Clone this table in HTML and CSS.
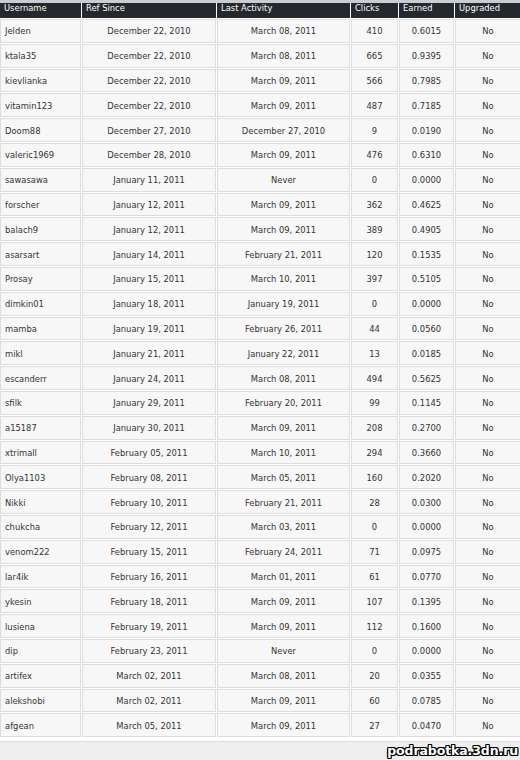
FILE: index.html
```html
<!DOCTYPE html>
<html>
<head>
<meta charset="utf-8">
<link rel="stylesheet" href="styles.css">
</head>
<body>
<div class="page">
  <div class="topstrip"></div>
  <table class="refs">
    <colgroup>
      <col class="c-user"><col class="c-since"><col class="c-act"><col class="c-clicks"><col class="c-earned"><col class="c-upg">
    </colgroup>
    <thead>
      <tr><th>Username</th><th>Ref Since</th><th>Last Activity</th><th>Clicks</th><th>Earned</th><th>Upgraded</th></tr>
    </thead>
    <tbody>
      <tr><td>Jelden</td><td>December 22, 2010</td><td>March 08, 2011</td><td>410</td><td>0.6015</td><td>No</td></tr>
      <tr><td>ktala35</td><td>December 22, 2010</td><td>March 08, 2011</td><td>665</td><td>0.9395</td><td>No</td></tr>
      <tr><td>kievlianka</td><td>December 22, 2010</td><td>March 09, 2011</td><td>566</td><td>0.7985</td><td>No</td></tr>
      <tr><td>vitamin123</td><td>December 22, 2010</td><td>March 09, 2011</td><td>487</td><td>0.7185</td><td>No</td></tr>
      <tr><td>Doom88</td><td>December 27, 2010</td><td>December 27, 2010</td><td>9</td><td>0.0190</td><td>No</td></tr>
      <tr><td>valeric1969</td><td>December 28, 2010</td><td>March 09, 2011</td><td>476</td><td>0.6310</td><td>No</td></tr>
      <tr><td>sawasawa</td><td>January 11, 2011</td><td>Never</td><td>0</td><td>0.0000</td><td>No</td></tr>
      <tr><td>forscher</td><td>January 12, 2011</td><td>March 09, 2011</td><td>362</td><td>0.4625</td><td>No</td></tr>
      <tr><td>balach9</td><td>January 12, 2011</td><td>March 09, 2011</td><td>389</td><td>0.4905</td><td>No</td></tr>
      <tr><td>asarsart</td><td>January 14, 2011</td><td>February 21, 2011</td><td>120</td><td>0.1535</td><td>No</td></tr>
      <tr><td>Prosay</td><td>January 15, 2011</td><td>March 10, 2011</td><td>397</td><td>0.5105</td><td>No</td></tr>
      <tr><td>dimkin01</td><td>January 18, 2011</td><td>January 19, 2011</td><td>0</td><td>0.0000</td><td>No</td></tr>
      <tr><td>mamba</td><td>January 19, 2011</td><td>February 26, 2011</td><td>44</td><td>0.0560</td><td>No</td></tr>
      <tr><td>mikl</td><td>January 21, 2011</td><td>January 22, 2011</td><td>13</td><td>0.0185</td><td>No</td></tr>
      <tr><td>escanderr</td><td>January 24, 2011</td><td>March 08, 2011</td><td>494</td><td>0.5625</td><td>No</td></tr>
      <tr><td>sfilk</td><td>January 29, 2011</td><td>February 20, 2011</td><td>99</td><td>0.1145</td><td>No</td></tr>
      <tr><td>a15187</td><td>January 30, 2011</td><td>March 09, 2011</td><td>208</td><td>0.2700</td><td>No</td></tr>
      <tr><td>xtrimall</td><td>February 05, 2011</td><td>March 10, 2011</td><td>294</td><td>0.3660</td><td>No</td></tr>
      <tr><td>Olya1103</td><td>February 08, 2011</td><td>March 05, 2011</td><td>160</td><td>0.2020</td><td>No</td></tr>
      <tr><td>Nikki</td><td>February 10, 2011</td><td>February 21, 2011</td><td>28</td><td>0.0300</td><td>No</td></tr>
      <tr><td>chukcha</td><td>February 12, 2011</td><td>March 03, 2011</td><td>0</td><td>0.0000</td><td>No</td></tr>
      <tr><td>venom222</td><td>February 15, 2011</td><td>February 24, 2011</td><td>71</td><td>0.0975</td><td>No</td></tr>
      <tr><td>lar4ik</td><td>February 16, 2011</td><td>March 01, 2011</td><td>61</td><td>0.0770</td><td>No</td></tr>
      <tr><td>ykesin</td><td>February 18, 2011</td><td>March 09, 2011</td><td>107</td><td>0.1395</td><td>No</td></tr>
      <tr><td>lusiena</td><td>February 19, 2011</td><td>March 09, 2011</td><td>112</td><td>0.1600</td><td>No</td></tr>
      <tr><td>dip</td><td>February 23, 2011</td><td>Never</td><td>0</td><td>0.0000</td><td>No</td></tr>
      <tr><td>artifex</td><td>March 02, 2011</td><td>March 08, 2011</td><td>20</td><td>0.0355</td><td>No</td></tr>
      <tr><td>alekshobi</td><td>March 02, 2011</td><td>March 09, 2011</td><td>60</td><td>0.0785</td><td>No</td></tr>
      <tr><td>afgean</td><td>March 05, 2011</td><td>March 09, 2011</td><td>27</td><td>0.0470</td><td>No</td></tr>
    </tbody>
  </table>
  <div class="footer"></div>
  <div class="watermark">podrabotka.3dn.ru</div>
</div>
</body>
</html>
```
FILE: styles.css
```css
html, body {
  margin: 0;
  padding: 0;
  background: #ffffff;
}
body {
  width: 520px;
  height: 760px;
  overflow: hidden;
  font-family: "DejaVu Sans Condensed", "DejaVu Sans", sans-serif;
  font-stretch: condensed;
  font-size: 9.3px;
  color: #333333;
}
.page {
  position: relative;
  width: 520px;
  height: 760px;
  overflow: hidden;
}
.topstrip {
  height: 3px;
  background: #c9cdd1;
}
.refs {
  table-layout: fixed;
  border-collapse: separate;
  border-spacing: 1px;
  width: 523px;
  margin: -1px 0 0 -1px;
}
.c-user { width: 81px; }
.c-since { width: 134px; }
.c-act { width: 133px; }
.c-clicks { width: 47px; }
.c-earned { width: 55px; }
.c-upg { width: 66px; }

.refs th {
  box-sizing: border-box;
  height: 15px;
  background: #25282c;
  color: #ffffff;
  font-weight: normal;
  text-align: left;
  vertical-align: top;
  padding: 0 4px;
  line-height: 10px;
  white-space: nowrap;
  overflow: hidden;
}
.refs td {
  box-sizing: border-box;
  height: 23.8px;
  background: #f7f7f7;
  border: 1px solid #dcdcdc;
  text-align: center;
  vertical-align: middle;
  padding: 0 4px;
  white-space: nowrap;
}
.refs td:first-child {
  text-align: left;
}
.footer {
  margin-top: 3px;
  height: 30px;
  border-top: 1px solid #dedede;
  background: #eeeeee;
}
.watermark {
  position: absolute;
  right: 2px;
  bottom: 2px;
  font-family: "DejaVu Sans", sans-serif;
  font-stretch: normal;
  font-weight: bold;
  font-size: 12.5px;
  color: #ffffff;
  text-shadow: 1px 0 0 #000, -1px 0 0 #000, 0 1px 0 #000, 0 -1px 0 #000,
               1px 1px 0 #000, -1px -1px 0 #000, 1px -1px 0 #000, -1px 1px 0 #000;
  letter-spacing: -0.1px;
}
```
